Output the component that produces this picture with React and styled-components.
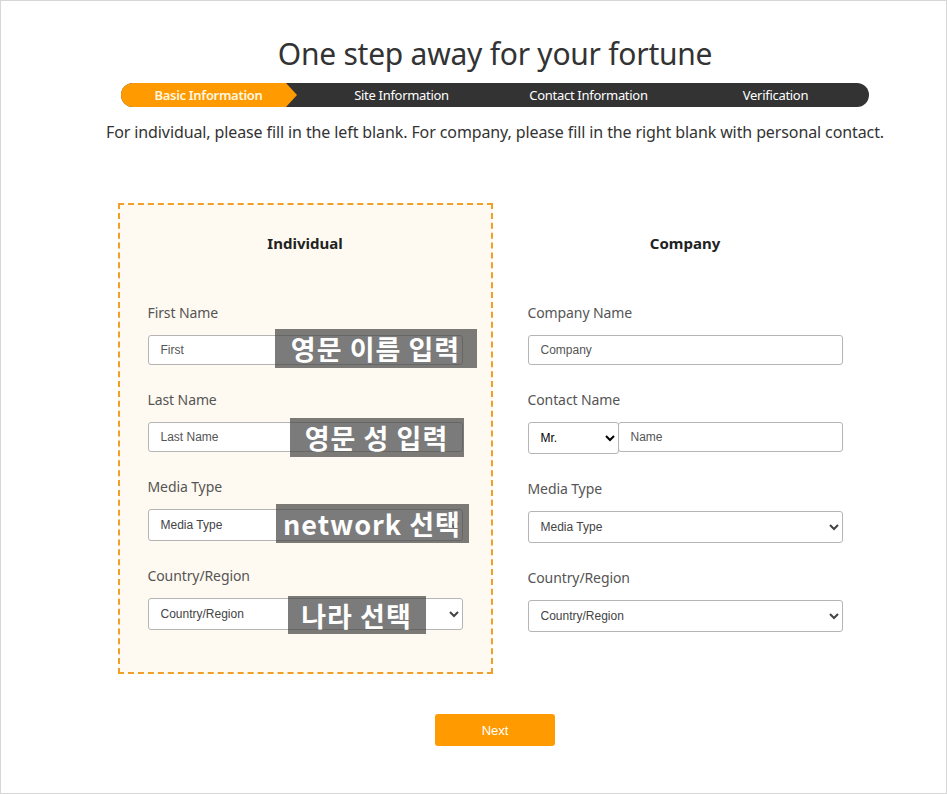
import React from "react";
import styled, { createGlobalStyle } from "styled-components";

const Global = createGlobalStyle`
  html, body { margin: 0; padding: 0; background: #fff; }
  * { box-sizing: border-box; }
`;

const Page = styled.div`
  width: 947px;
  height: 794px;
  border: 1px solid #d6d6d6;
  font-family: "Noto Sans", "Noto Sans CJK KR", sans-serif;
  color: #333;
  overflow: hidden;
`;

const Container = styled.div`
  width: 790px;
  margin-left: 99px;
  padding-top: 33px;
  display: flex;
  flex-direction: column;
  align-items: center;
`;

const Title = styled.h1`
  margin: 0;
  font-size: 30px;
  line-height: 40px;
  font-weight: 400;
  color: #333;
  letter-spacing: -0.25px;
`;

const StepBar = styled.div`
  margin-top: 9px;
  width: 748px;
  height: 24px;
  border-radius: 12px;
  background: #333;
  display: grid;
  grid-template-columns: repeat(4, 1fr);
  overflow: hidden;
`;

const Step = styled.div`
  position: relative;
  display: flex;
  align-items: center;
  justify-content: center;
  padding-right: ${(p) => (p.$active ? "12px" : "0")};
  font-family: "Noto Sans", sans-serif;
  font-size: 13px;
  font-weight: ${(p) => (p.$active ? 600 : 400)};
  letter-spacing: -0.3px;
  color: ${(p) => (p.$active ? "#fff8e0" : "#fff")};
  &::before {
    content: "";
    display: ${(p) => (p.$active ? "block" : "none")};
    position: absolute;
    left: 0;
    top: 0;
    bottom: 0;
    width: 176px;
    background: #ff9a00;
    clip-path: polygon(0 0, calc(100% - 11px) 0, 100% 50%, calc(100% - 11px) 100%, 0 100%);
  }
  span { position: relative; }
`;

const Subtitle = styled.p`
  margin: 14px 0 0;
  font-size: 16px;
  line-height: 22px;
  color: #333;
  letter-spacing: -0.11px;
`;

const Columns = styled.div`
  margin-top: 60px;
  display: grid;
  grid-template-columns: 375px 375px;
  column-gap: 5px;
`;

const Panel = styled.div`
  border: 2px dashed ${(p) => (p.$active ? "#f0a028" : "transparent")};
  background: ${(p) => (p.$active ? "#fffaf1" : "transparent")};
  padding: 28px 28px 42px;
  height: 471px;
`;

const PanelTitle = styled.h2`
  margin: 0 0 50px;
  text-align: center;
  font-size: 15px;
  line-height: 20px;
  font-weight: 700;
  color: #222;
`;

const Field = styled.div`
  margin-bottom: 25px;
`;

const Label = styled.div`
  font-size: 14px;
  line-height: 20px;
  color: #555;
  margin-bottom: 12px;
  letter-spacing: -0.1px;
`;

const ControlWrap = styled.div`
  position: relative;
  display: flex;
`;

const TextInput = styled.input`
  flex: 1;
  min-width: 0;
  height: 30px;
  border: 1px solid #b5b5b5;
  border-radius: 3px;
  background: #fff;
  padding: 0 12px;
  font-family: "Liberation Sans", Arial, sans-serif;
  font-size: 12px;
  color: #333;
  margin-left: ${(p) => p.$ml || "0"};
  &::placeholder { color: #555; }
`;

const Select = styled.select`
  width: ${(p) => p.$w || "100%"};
  flex: ${(p) => (p.$w ? "none" : "1")};
  height: 32px;
  border: 1px solid #b5b5b5;
  border-radius: 3px;
  background: #fff;
  padding: 0 8px;
  font-family: "Liberation Sans", Arial, sans-serif;
  font-size: 12px;
  color: ${(p) => (p.$dark ? "#000" : "#444")};
`;

const Overlay = styled.div`
  position: absolute;
  left: ${(p) => p.$x}px;
  top: ${(p) => p.$y}px;
  width: ${(p) => p.$w}px;
  height: ${(p) => p.$h}px;
  background: rgba(72, 72, 72, 0.72);
  color: #fff;
  display: flex;
  align-items: center;
  justify-content: center;
  font-family: "Noto Sans CJK KR", "Noto Sans", sans-serif;
  font-weight: 700;
  font-size: 27px;
  letter-spacing: 1px;
  pointer-events: none;
  white-space: nowrap;
`;

const NextButton = styled.button`
  margin-top: 40px;
  width: 120px;
  height: 32px;
  border: none;
  border-radius: 3px;
  background: #ff9a00;
  color: #fff;
  font-family: "Liberation Sans", Arial, sans-serif;
  font-size: 13px;
  cursor: pointer;
`;

const steps = ["Basic Information", "Site Information", "Contact Information", "Verification"];

export default function App() {
  return (
    <Page>
      <Global />
      <Container>
        <Title>One step away for your fortune</Title>
        <StepBar>
          {steps.map((s, i) => (
            <Step key={s} $active={i === 0}>
              <span>{s}</span>
            </Step>
          ))}
        </StepBar>
        <Subtitle>
          For individual, please fill in the left blank. For company, please fill in the right blank with personal contact.
        </Subtitle>
        <Columns>
          <Panel $active>
            <PanelTitle>Individual</PanelTitle>
            <Field>
              <Label>First Name</Label>
              <ControlWrap>
                <TextInput placeholder="First" />
                <Overlay $x={127} $y={-6} $w={202} $h={39}>영문 이름 입력</Overlay>
              </ControlWrap>
            </Field>
            <Field>
              <Label>Last Name</Label>
              <ControlWrap>
                <TextInput placeholder="Last Name" />
                <Overlay $x={142} $y={-4} $w={174} $h={39}>영문 성 입력</Overlay>
              </ControlWrap>
            </Field>
            <Field>
              <Label>Media Type</Label>
              <ControlWrap>
                <Select defaultValue="">
                  <option value="">Media Type</option>
                </Select>
                <Overlay $x={128} $y={-5} $w={193} $h={39}>network 선택</Overlay>
              </ControlWrap>
            </Field>
            <Field>
              <Label>Country/Region</Label>
              <ControlWrap>
                <Select defaultValue="">
                  <option value="">Country/Region</option>
                </Select>
                <Overlay $x={140} $y={-2} $w={138} $h={38}>나라 선택</Overlay>
              </ControlWrap>
            </Field>
          </Panel>
          <Panel>
            <PanelTitle>Company</PanelTitle>
            <Field>
              <Label>Company Name</Label>
              <ControlWrap>
                <TextInput placeholder="Company" />
              </ControlWrap>
            </Field>
            <Field>
              <Label>Contact Name</Label>
              <ControlWrap>
                <Select $w="91px" $dark defaultValue="mr">
                  <option value="mr">Mr.</option>
                  <option value="ms">Ms.</option>
                </Select>
                <TextInput placeholder="Name" $ml="-1px" />
              </ControlWrap>
            </Field>
            <Field>
              <Label>Media Type</Label>
              <ControlWrap>
                <Select defaultValue="">
                  <option value="">Media Type</option>
                </Select>
              </ControlWrap>
            </Field>
            <Field>
              <Label>Country/Region</Label>
              <ControlWrap>
                <Select defaultValue="">
                  <option value="">Country/Region</option>
                </Select>
              </ControlWrap>
            </Field>
          </Panel>
        </Columns>
        <NextButton>Next</NextButton>
      </Container>
    </Page>
  );
}
